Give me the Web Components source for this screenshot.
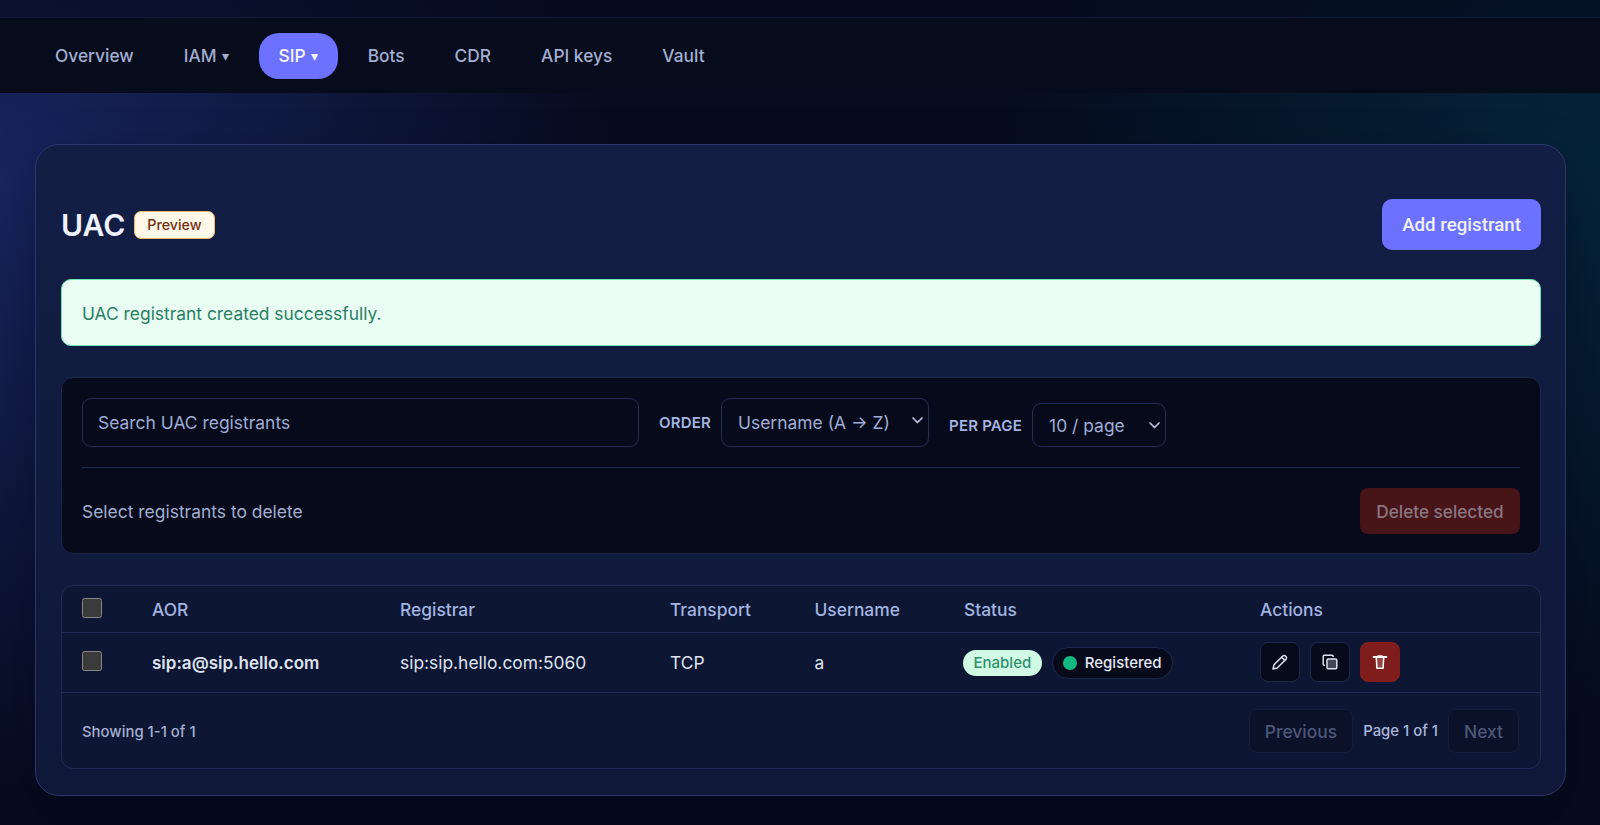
<!DOCTYPE html>
<html lang="en">
<head>
<meta charset="utf-8">
<title>UAC</title>
<style>
    html, body { margin: 0; height: 100%; }
    body {
        height: 825px;
        overflow: hidden;
        font-family: Inter, "Liberation Sans", sans-serif;
        color: #e2e8f0;
        background:
            radial-gradient(620px 620px at 0% 22%, #18255f 0%, rgba(24, 37, 95, 0) 100%),
            radial-gradient(620px 560px at 100% 20%, #05243a 0%, rgba(5, 36, 58, 0) 100%),
            #060b1e;
    }
</style>
</head>
<body>
<app-nav>
    <nav-item>Overview</nav-item>
    <nav-item caret>IAM</nav-item>
    <nav-item caret active>SIP</nav-item>
    <nav-item>Bots</nav-item>
    <nav-item>CDR</nav-item>
    <nav-item>API keys</nav-item>
    <nav-item>Vault</nav-item>
</app-nav>
<main-card>
    <page-header title="UAC" badge="Preview" action="Add registrant"></page-header>
    <flash-alert>UAC registrant created successfully.</flash-alert>
    <filter-panel></filter-panel>
    <registrant-table>
        <registrant-row aor="sip:a@sip.hello.com" registrar="sip:sip.hello.com:5060" transport="TCP" username="a"></registrant-row>
    </registrant-table>
</main-card>

<script>
const icons = {
    pencil: '<path d="M1 15l1-4.2L10.8 2a2.3 2.3 0 0 1 3.2 3.2L5.2 14z"/><path d="M9.6 3.2l3.2 3.2"/>',
    copy: '<rect x="5" y="5" width="9.8" height="9.8" rx="1.3" fill="#8a90a0" fill-opacity=".45"/><path d="M2.4 11.2C1.7 11.2 1.2 10.7 1.2 10V2.4c0-.7.5-1.2 1.2-1.2H10c.7 0 1.2.5 1.2 1.2"/>',
    trash: '<path d="M1.6 3h12.8" stroke-width="2"/><path d="M6 2h4"/><path d="M4.3 3.6l.6 10.6h6.2l.6-10.6" fill="#fff" fill-opacity=".18"/>',
};

class AppNav extends HTMLElement {
    constructor() {
        super();
        this.attachShadow({ mode: 'open' });
        this.shadowRoot.innerHTML = `
            <style>
                :host { display: block; padding-top: 17px; background: rgba(5, 10, 28, .6); }
                nav {
                    display: flex;
                    align-items: center;
                    gap: 10px;
                    box-sizing: border-box;
                    height: 76px;
                    padding: 0 35px;
                    border-top: 1px solid #111a36;
                    background: #070c1c;
                }
            </style>
            <nav><slot></slot></nav>
        `;
    }
}

class NavItem extends HTMLElement {
    constructor() {
        super();
        this.attachShadow({ mode: 'open' });
        const caret = this.hasAttribute('caret') ? '<span class="caret">▾</span>' : '';
        this.shadowRoot.innerHTML = `
            <style>
                :host {
                    display: flex;
                    align-items: center;
                    gap: 5px;
                    height: 46px;
                    padding: 0 20px;
                    border-radius: 20px;
                    font-size: 17.35px;
                    font-weight: 500;
                    color: #a3aed0;
                }
                :host([active]) { background: #6c72ff; color: #f5f6ff; }
                .caret { font-size: 14px; }
            </style>
            <slot></slot>${caret}
        `;
    }
}

class MainCard extends HTMLElement {
    constructor() {
        super();
        this.attachShadow({ mode: 'open' });
        this.shadowRoot.innerHTML = `
            <style>
                :host {
                    display: block;
                    box-sizing: border-box;
                    width: 1531px;
                    height: 652px;
                    margin: 51px 0 0 35px;
                    padding: 54px 24px 0 25px;
                    border: 1px solid #2a3768;
                    border-radius: 24px;
                    background: linear-gradient(180deg, #131e45, #0f1839);
                    box-shadow: 0 20px 50px rgba(2, 6, 23, .35);
                }
            </style>
            <slot></slot>
        `;
    }
}

class PageHeader extends HTMLElement {
    constructor() {
        super();
        this.attachShadow({ mode: 'open' });
        this.shadowRoot.innerHTML = `
            <style>
                :host { display: flex; align-items: center; justify-content: space-between; height: 51px; }
                .left { display: flex; align-items: center; gap: 9px; }
                h1 { margin: 0; font-size: 30px; font-weight: 600; color: #eef2ff; }
                .badge {
                    box-sizing: border-box;
                    height: 28px;
                    padding: 0 12px;
                    display: flex;
                    align-items: center;
                    border: 1px solid #f0b661;
                    border-radius: 7px;
                    background: #fff8e8;
                    color: #743112;
                    font-size: 14.3px;
                    font-weight: 500;
                }
                button {
                    width: 159px;
                    height: 51px;
                    padding: 1px 0 0;
                    border: 0;
                    border-radius: 10px;
                    background: #6c72ff;
                    color: #f0f1ff;
                    font: 500 18.7px Roboto, Inter, sans-serif;
                }
            </style>
            <div class="left">
                <h1>${this.getAttribute('title')}</h1>
                <span class="badge">${this.getAttribute('badge')}</span>
            </div>
            <button>${this.getAttribute('action')}</button>
        `;
    }
}

class FlashAlert extends HTMLElement {
    constructor() {
        super();
        this.attachShadow({ mode: 'open' });
        this.shadowRoot.innerHTML = `
            <style>
                :host {
                    display: flex;
                    align-items: center;
                    box-sizing: border-box;
                    height: 67px;
                    margin-top: 29px;
                    padding: 1px 20px 0;
                    border: 1px solid #6ee7b7;
                    border-radius: 10px;
                    background: #e9fdf3;
                    color: #2a8064;
                    font-size: 17.4px;
                }
            </style>
            <slot></slot>
        `;
    }
}

class SelectField extends HTMLElement {
    constructor() {
        super();
        this.attachShadow({ mode: 'open' });
        this.shadowRoot.innerHTML = `
            <style>
                :host { display: block; position: relative; }
                select {
                    appearance: none;
                    display: block;
                    box-sizing: border-box;
                    width: 100%;
                    height: 100%;
                    padding: 0 16px;
                    border: 1px solid #222e58;
                    border-radius: 9px;
                    background: #060a1a;
                    color: #a0add6;
                    font: 17.45px Inter, sans-serif;
                    outline: none;
                }
                svg {
                    position: absolute;
                    right: 6px;
                    top: var(--chevron-top, 50%);
                    width: 11px;
                    height: 7px;
                    margin-top: -3.5px;
                    fill: none;
                    stroke: #b7c0dc;
                    stroke-width: 1.7;
                    stroke-linecap: round;
                    stroke-linejoin: round;
                    pointer-events: none;
                }
            </style>
            <select><option>${this.getAttribute('value')}</option></select>
            <svg viewBox="0 0 11 7"><path d="M1 1l4.5 4.5L10 1"/></svg>
        `;
    }
}

class FilterPanel extends HTMLElement {
    constructor() {
        super();
        this.attachShadow({ mode: 'open' });
        this.shadowRoot.innerHTML = `
            <style>
                :host {
                    display: block;
                    box-sizing: border-box;
                    height: 177px;
                    margin-top: 31px;
                    padding: 20px;
                    border: 1px solid #1c274c;
                    border-radius: 12px;
                    background: #060a1a;
                    color: #a3aed0;
                }
                .filters {
                    display: flex;
                    align-items: flex-end;
                    padding-bottom: 20px;
                    border-bottom: 1px solid #1f2a50;
                }
                input {
                    box-sizing: border-box;
                    width: 557px;
                    height: 49px;
                    padding: 0 15px;
                    border: 1px solid #222e58;
                    border-radius: 9px;
                    background: #060a1a;
                    color: #a0add6;
                    font: 17.45px Inter, sans-serif;
                    outline: none;
                }
                input::placeholder { color: #a0add6; opacity: 1; }
                select-field.order { width: 208px; height: 49px; --chevron-top: 45%; }
                select-field.per { width: 134px; height: 44px; }
                label {
                    display: flex;
                    align-items: center;
                    gap: 10px;
                    margin-left: 20px;
                    font-size: 15px;
                    font-weight: 600;
                    letter-spacing: .2px;
                    color: #a3b4e0;
                }
                .bulk {
                    display: flex;
                    align-items: center;
                    justify-content: space-between;
                    padding-top: 20px;
                    font-size: 17.45px;
                }
                button {
                    width: 160px;
                    height: 46px;
                    border: 0;
                    border-radius: 8px;
                    background: #471418;
                    color: #8c7680;
                    font: 500 17.2px Inter, sans-serif;
                }
            </style>
            <div class="filters">
                <input type="search" placeholder="Search UAC registrants">
                <label>ORDER <select-field class="order" value="Username (A → Z)"></select-field></label>
                <label>PER PAGE <select-field class="per" value="10 / page"></select-field></label>
            </div>
            <div class="bulk">
                <span>Select registrants to delete</span>
                <button disabled>Delete selected</button>
            </div>
        `;
    }
}

const gridColumns = '70px 248px 270px 144.5px 149.5px 296px 1fr';

class RegistrantTable extends HTMLElement {
    constructor() {
        super();
        this.attachShadow({ mode: 'open' });
        this.shadowRoot.innerHTML = `
            <style>
                :host {
                    display: block;
                    box-sizing: border-box;
                    height: 184px;
                    margin-top: 31px;
                    border: 1px solid #1f2b54;
                    border-radius: 12px;
                    background: #0d1633;
                }
                .head {
                    display: grid;
                    grid-template-columns: ${gridColumns};
                    align-items: center;
                    height: 46px;
                    padding-left: 20px;
                    border-bottom: 1px solid #1f2b54;
                    font-size: 17.4px;
                    font-weight: 500;
                    color: #a3b4e0;
                }
                input { width: 20px; height: 20px; margin: 0 0 3px; color-scheme: dark; display: block; }
                .foot {
                    display: flex;
                    align-items: center;
                    justify-content: space-between;
                    height: 75px;
                    padding: 0 21px 0 20px;
                    font-size: 14.9px;
                    font-weight: 500;
                    color: #a3aed0;
                }
                .foot > span { padding-top: 2px; }
                .pager { display: flex; align-items: center; gap: 10px; color: #a9b6dc; }
                button {
                    height: 44px;
                    padding: 1px 15px 0;
                    border: 1px solid #141d3e;
                    border-radius: 8px;
                    background: #0a1128;
                    color: #4d5878;
                    font: 500 17.45px Inter, sans-serif;
                }
            </style>
            <div class="head">
                <input type="checkbox">
                <span>AOR</span><span>Registrar</span><span>Transport</span><span>Username</span><span>Status</span><span>Actions</span>
            </div>
            <slot></slot>
            <div class="foot">
                <span>Showing 1-1 of 1</span>
                <div class="pager">
                    <button disabled>Previous</button>
                    <span>Page 1 of 1</span>
                    <button disabled>Next</button>
                </div>
            </div>
        `;
    }
}

class RegistrantRow extends HTMLElement {
    constructor() {
        super();
        this.attachShadow({ mode: 'open' });
        const attr = name => this.getAttribute(name);
        this.shadowRoot.innerHTML = `
            <style>
                :host {
                    display: grid;
                    grid-template-columns: ${gridColumns};
                    align-items: center;
                    height: 59px;
                    padding-left: 20px;
                    border-bottom: 1px solid #1f2b54;
                    font-size: 17.4px;
                    color: #dfe3f0;
                }
                input { width: 20px; height: 20px; margin: 0 0 3px; color-scheme: dark; display: block; }
                .aor { font-size: 17.05px; font-weight: 600; }
                .status, .actions { display: flex; align-items: center; gap: 10px; }
                .status { margin-left: -1px; }
                .actions { margin-bottom: 2px; }
            </style>
            <input type="checkbox">
            <span class="aor">${attr('aor')}</span>
            <span>${attr('registrar')}</span>
            <span>${attr('transport')}</span>
            <span>${attr('username')}</span>
            <div class="status">
                <status-pill tone="enabled">Enabled</status-pill>
                <status-pill tone="registered">Registered</status-pill>
            </div>
            <div class="actions">
                <icon-button icon="pencil"></icon-button>
                <icon-button icon="copy"></icon-button>
                <icon-button icon="trash" danger></icon-button>
            </div>
        `;
    }
}

class StatusPill extends HTMLElement {
    constructor() {
        super();
        this.attachShadow({ mode: 'open' });
        const registered = this.getAttribute('tone') === 'registered';
        this.shadowRoot.innerHTML = `
            <style>
                :host {
                    display: flex;
                    align-items: center;
                    gap: 8px;
                    box-sizing: border-box;
                    border-radius: 999px;
                    font-size: 15px;
                    font-weight: 500;
                }
                :host([tone="enabled"]) { height: 26px; padding: 0 10.5px; background: #d1fae5; color: #2f8f6f; }
                :host([tone="registered"]) { height: 32px; padding: 0 10px; border: 1px solid #1c274c; background: #060a1a; color: #e4e8f6; }
                i { width: 14px; height: 14px; border-radius: 50%; background: #10b981; }
            </style>
            ${registered ? '<i></i>' : ''}<slot></slot>
        `;
    }
}

class IconButton extends HTMLElement {
    constructor() {
        super();
        this.attachShadow({ mode: 'open' });
        this.shadowRoot.innerHTML = `
            <style>
                :host {
                    display: flex;
                    align-items: center;
                    justify-content: center;
                    box-sizing: border-box;
                    width: 40px;
                    height: 40px;
                    border: 1px solid #1c274c;
                    border-radius: 8px;
                    background: #060a1a;
                    color: #dfe2ea;
                }
                :host([danger]) { background: #7f1d1d; border-color: #7f1d1d; color: #fff; }
                svg { width: 16px; height: 16px; fill: none; stroke: currentColor; stroke-width: 1.5; stroke-linecap: round; stroke-linejoin: round; }
            </style>
            <svg viewBox="0 0 16 16">${icons[this.getAttribute('icon')]}</svg>
        `;
    }
}

customElements.define('app-nav', AppNav);
customElements.define('nav-item', NavItem);
customElements.define('main-card', MainCard);
customElements.define('page-header', PageHeader);
customElements.define('flash-alert', FlashAlert);
customElements.define('select-field', SelectField);
customElements.define('filter-panel', FilterPanel);
customElements.define('registrant-table', RegistrantTable);
customElements.define('registrant-row', RegistrantRow);
customElements.define('status-pill', StatusPill);
customElements.define('icon-button', IconButton);
</script>
</body>
</html>
